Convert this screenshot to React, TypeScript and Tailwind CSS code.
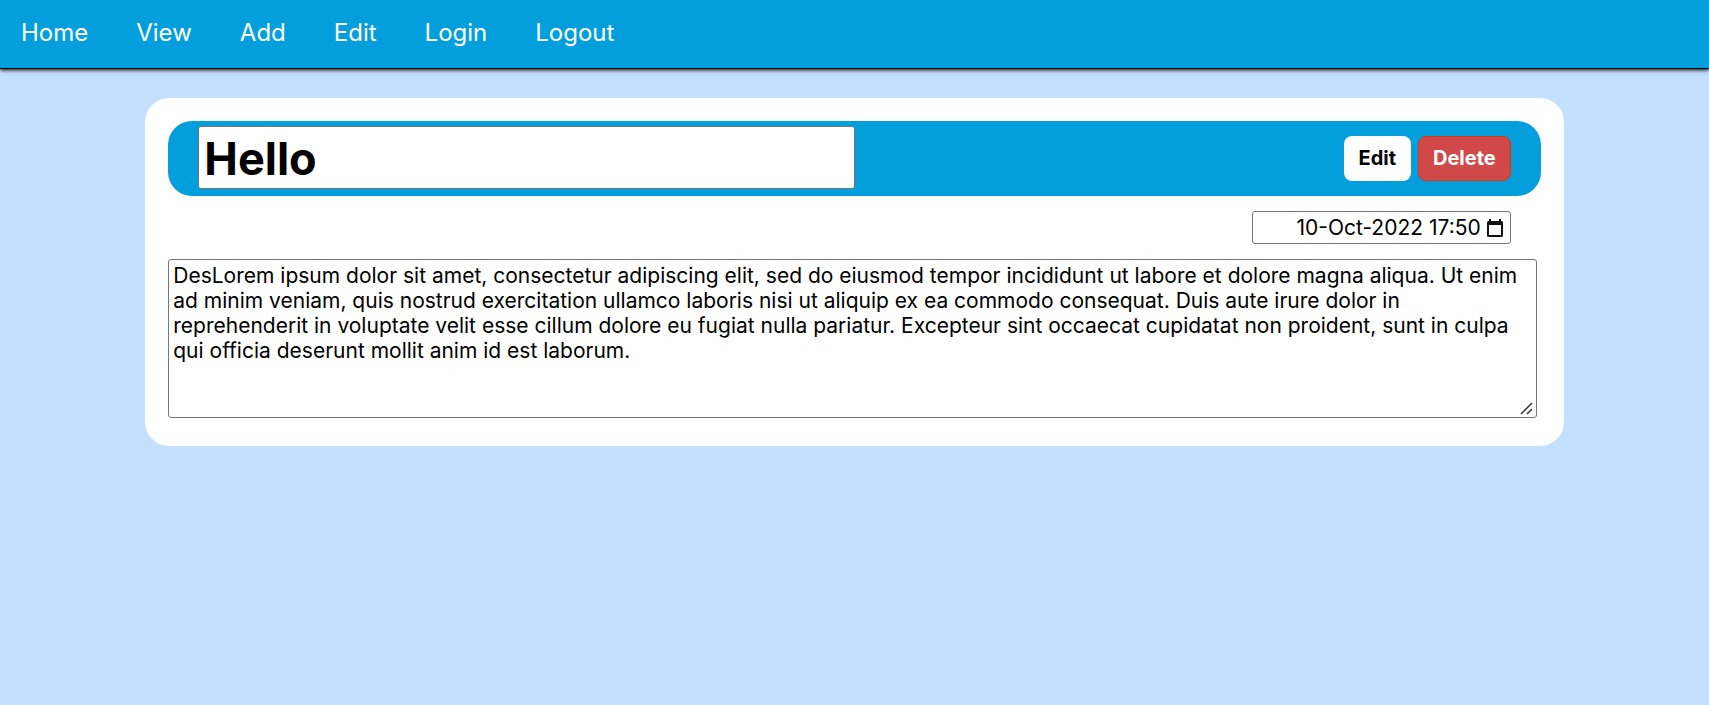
import { useState } from "react";

const links = ["Home", "View", "Add", "Edit", "Login", "Logout"];

const description =
  "DesLorem ipsum dolor sit amet, consectetur adipiscing elit, sed do eiusmod tempor incididunt ut labore et dolore magna aliqua. Ut enim ad minim veniam, quis nostrud exercitation ullamco laboris nisi ut aliquip ex ea commodo consequat. Duis aute irure dolor in reprehenderit in voluptate velit esse cillum dolore eu fugiat nulla pariatur. Excepteur sint occaecat cupidatat non proident, sunt in culpa qui officia deserunt mollit anim id est laborum.";

function NavBar() {
  return (
    <nav className="flex h-[69px] items-center gap-12 border-b border-black bg-[#039fdd] px-[21px] pb-0.5 text-2xl text-white shadow-[0_1px_4px_#000]">
      {links.map((link) => (
        <a key={link} href={"#" + link.toLowerCase()}>
          {link}
        </a>
      ))}
    </nav>
  );
}

function CalendarIcon() {
  return (
    <svg width="16" height="18" viewBox="0 0 16 18" aria-hidden="true">
      <path
        fill="#111"
        fillRule="evenodd"
        d="M2 0h2v2h8V0h2v2h.5A1.5 1.5 0 0 1 16 3.500v13a1.500 1.500 0 0 1-1.500 1.500h-13A1.500 1.500 0 0 1 0 16.500v-13A1.500 1.500 0 0 1 1.500 2H2zM2 6v10h12V6z"
      />
    </svg>
  );
}

function ResizeGrip() {
  return (
    <svg
      className="pointer-events-none absolute right-2 bottom-[3px]"
      width="13"
      height="13"
      viewBox="0 0 13 13"
      aria-hidden="true"
    >
      <path d="M1 12L12 1M7 12l5-5" stroke="#333" strokeWidth="1.500" fill="none" />
    </svg>
  );
}

export default function App() {
  const [title, setTitle] = useState("Hello");
  const [date, setDate] = useState("10-Oct-2022 17:50");
  const [text, setText] = useState(description);

  return (
    <div className="min-h-screen bg-[#c3e0ff] font-['Inter',sans-serif] text-black">
      <NavBar />
      <main className="mx-auto mt-[29px] w-[83%] rounded-3xl bg-white px-[23px] pt-[23px] pb-7">
        <header className="flex h-[75px] items-center justify-between rounded-3xl bg-[#039fdd] px-[30px]">
          <input
            aria-label="Title"
            value={title}
            onChange={(e) => setTitle(e.target.value)}
            className="mb-0.5 h-[63px] w-1/2 rounded-[3px] border border-[#767676] bg-white px-[5px] pt-0.5 text-[45px] font-bold"
          />
          <div className="flex gap-[7px] text-xl font-bold">
            <button type="button" className="h-[45px] rounded-lg bg-white px-[15px] pb-0.5">
              Edit
            </button>
            <button
              type="button"
              className="h-[45px] rounded-lg border border-[#dc3912] bg-[#d14848] px-3.5 pb-0.5 text-white"
            >
              Delete
            </button>
          </div>
        </header>
        <div className="mt-[15px] flex justify-end pr-[30px]">
          <div className="flex h-[33px] w-[259px] items-center gap-1.5 rounded-[3px] border border-[#767676] pr-[7px]">
            <input
              aria-label="Date and time"
              value={date}
              onChange={(e) => setDate(e.target.value)}
              className="min-w-0 flex-1 bg-transparent text-right text-[21px]"
            />
            <button type="button" aria-label="Open calendar">
              <CalendarIcon />
            </button>
          </div>
        </div>
        <div className="relative mt-[15px] pr-1">
          <textarea
            aria-label="Description"
            value={text}
            onChange={(e) => setText(e.target.value)}
            className="block h-[159px] w-full rounded-[3px] border border-[#767676] px-1 py-[3px] text-[21px] leading-[25px] [&::-webkit-resizer]:bg-transparent"
          />
          <ResizeGrip />
        </div>
      </main>
    </div>
  );
}
